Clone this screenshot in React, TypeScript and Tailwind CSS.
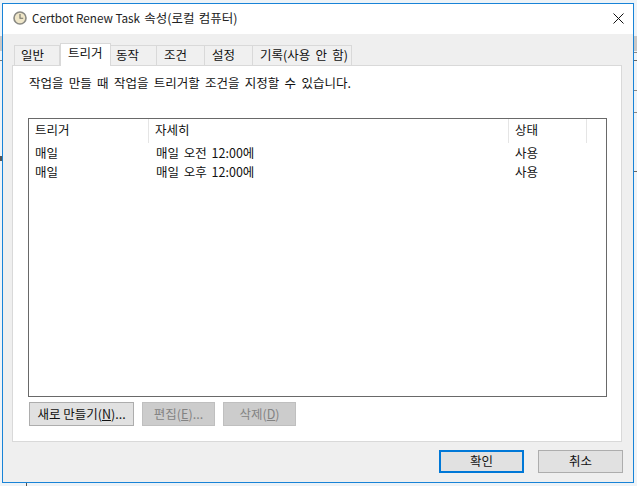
import React from 'react';

const FONT = "font-['Noto_Sans_CJK_KR','Noto_Sans',sans-serif]";

const tabs = [
  { label: '일반', className: 'w-[46px] pl-[6px]' },
  { label: '트리거', className: 'w-[51px] pl-[7px]', active: true },
  { label: '동작', className: 'w-[47px] pl-[5px]' },
  { label: '조건', className: 'w-[49px] pl-[7px]' },
  { label: '설정', className: 'w-[49px] pl-[7px]' },
  { label: '기록(사용 안 함)', className: 'w-[100px] pl-[7px]' },
];

const rows = [
  { name: '매일', detail: '매일 오전 12:00에', status: '사용' },
  { name: '매일', detail: '매일 오후 12:00에', status: '사용' },
];

function ClockIcon() {
  return (
    <svg width="14" height="14" viewBox="0 0 14 14" className="shrink-0">
      <circle cx="7" cy="7" r="6" fill="#efe6c8" stroke="#8a8a84" strokeWidth="1.6" />
      <path d="M7 3v4.2h3.2" fill="none" stroke="#6f6f66" strokeWidth="1.1" />
    </svg>
  );
}

function CloseIcon() {
  return (
    <svg width="11" height="11" viewBox="0 0 11 11">
      <path d="M0.5 0.5l10 10M10.5 0.5l-10 10" stroke="#111" strokeWidth="1" fill="none" />
    </svg>
  );
}

export default function App() {
  return (
    <div className={`${FONT} relative w-[637px] h-[486px] overflow-hidden bg-[#eef3f7] pl-[2px] pt-[3px] text-[12.5px] leading-none text-[#111] [word-spacing:2.5px]`}>
      {/* Bits of the window behind the dialog */}
      <div className="absolute left-0 top-[36px] w-[2px] h-[15px] bg-[#c8c8c8]" />
      <div className="absolute left-0 top-[60px] w-[2px] h-px bg-[#777]" />
      <div className="absolute left-0 top-[156px] w-[2px] h-[5px] bg-[#555]" />
      <div className="absolute right-0 top-[36px] w-[3px] h-[15px] bg-[#c8c8c8]" />
      <div className="absolute right-0 top-[52px] w-[3px] h-px bg-[#888]" />
      <div className="absolute right-0 top-[60px] w-[3px] h-px bg-[#666]" />
      <div className="absolute right-0 top-[90px] w-[3px] h-px bg-[#888]" />
      <div className="absolute right-0 top-[112px] w-[3px] h-px bg-[#888]" />
      <div className="absolute right-0 top-[171px] w-[3px] h-px bg-[#666]" />
      <div className="absolute left-[26px] top-[483px] w-px h-[3px] bg-[#555]" />

      <div className="relative w-[632px] h-[480px] border border-[#1883d7] flex flex-col bg-[#efefef]">
        {/* Title bar */}
        <div className="h-[30px] shrink-0 bg-white flex items-center pl-[10px] pr-[9px] pb-[2px]">
          <ClockIcon />
          <span className="ml-[5px] text-[#222] [word-spacing:1.5px]">
            <span className="text-[11.7px] [word-spacing:0]">Certbot Renew Task</span> 속성(로컬 컴퓨터)
          </span>
          <span className="ml-auto flex">
            <CloseIcon />
          </span>
        </div>

        {/* Tabs */}
        <div className="h-[31px] shrink-0 pl-[11px] flex items-end">
          {tabs.map((tab) =>
            tab.active ? (
              <div
                key={tab.label}
                className={`${tab.className} h-[23px] -mb-px z-10 bg-white border border-b-0 border-[#d9d9d9] flex items-center pb-[4px]`}
              >
                {tab.label}
              </div>
            ) : (
              <div
                key={tab.label}
                className={`${tab.className} h-[20px] bg-[#f0f0f0] border border-b-0 border-[#d9d9d9] -ml-px first:ml-0 flex items-center`}
              >
                {tab.label}
              </div>
            ),
          )}
        </div>

        {/* Panel */}
        <div className="ml-[9px] w-[610px] h-[377px] shrink-0 bg-white border border-[#d9d9d9] flex flex-col pl-[15px] pr-[14px]">
          <p className="mt-[11px] pl-[1px] h-[14px]">작업을 만들 때 작업을 트리거할 조건을 지정할 수 있습니다.</p>

          <div className="mt-[27px] h-[279px] shrink-0 border border-[#696969] bg-white">
            <div className="flex h-[24px]">
              <div className="w-[120px] border-r border-[#e5e5e5] pl-[6px] pb-[2px] flex items-center">트리거</div>
              <div className="w-[360px] border-r border-[#e5e5e5] pl-[6px] pb-[2px] flex items-center">자세히</div>
              <div className="w-[78px] border-r border-[#e5e5e5] pl-[6px] pb-[2px] flex items-center">상태</div>
            </div>
            {rows.map((row) => (
              <div key={row.detail} className="flex h-[19px] items-center pt-[1px]">
                <div className="w-[120px] pl-[6px]">{row.name}</div>
                <div className="w-[360px] pl-[7px] [word-spacing:2px]">{row.detail}</div>
                <div className="w-[78px] pl-[6px]">{row.status}</div>
              </div>
            ))}
          </div>

          <div className="mt-[5px] pl-px flex [word-spacing:3.5px]">
            <button className="w-[105px] h-[24px] bg-[#e1e1e1] border border-[#adadad] flex items-center justify-center">
              <span>
                새로 만들기(<span className="underline">N</span>)...
              </span>
            </button>
            <button className="ml-[8px] w-[73px] h-[24px] bg-[#cccccc] border border-[#bfbfbf] text-[#838383] flex items-center justify-center">
              <span>
                편집(<span className="underline">E</span>)...
              </span>
            </button>
            <button className="ml-[8px] w-[73px] h-[24px] bg-[#cccccc] border border-[#bfbfbf] text-[#838383] flex items-center justify-center">
              <span>
                삭제(<span className="underline">D</span>)
              </span>
            </button>
          </div>
        </div>

        {/* Footer */}
        <div className="flex justify-end pr-[10px] pt-[8px]">
          <button className="w-[85px] h-[23px] bg-[#e1e1e1] border-2 border-[#0078d7] flex items-center justify-center">확인</button>
          <button className="ml-[14px] w-[85px] h-[23px] bg-[#e1e1e1] border border-[#adadad] flex items-center justify-center">취소</button>
        </div>
      </div>
    </div>
  );
}
